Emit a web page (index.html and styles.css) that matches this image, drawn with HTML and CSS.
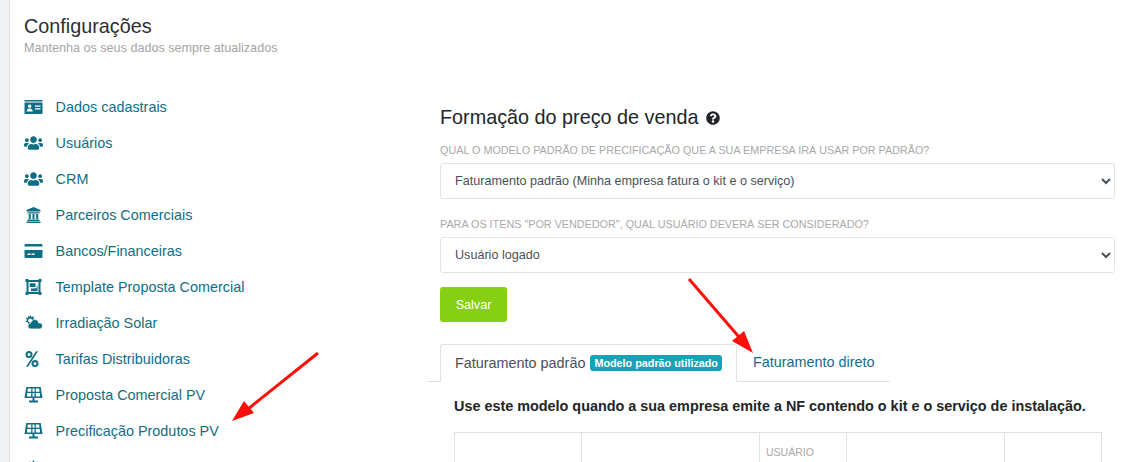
FILE: index.html
```html
<!DOCTYPE html>
<html lang="pt-BR">

<head>
    <meta charset="UTF-8">
    <meta name="viewport" content="width=device-width, initial-scale=1.0">
    <title>Configurações</title>
    <link rel="stylesheet" href="styles.css">
</head>

<body>
    <svg class="defs" width="0" height="0">
        <symbol id="i-users" viewBox="0 0 640 512"><path d="M96 224c35.3 0 64-28.7 64-64s-28.7-64-64-64-64 28.7-64 64 28.7 64 64 64zm448 0c35.3 0 64-28.7 64-64s-28.7-64-64-64-64 28.7-64 64 28.7 64 64 64zm32 32h-64c-17.6 0-33.5 7.1-45.1 18.6 40.3 22.1 68.9 62 75.1 109.4h66c17.7 0 32-14.3 32-32v-32c0-35.3-28.7-64-64-64zm-256 0c61.9 0 112-50.1 112-112S381.9 32 320 32 208 82.1 208 144s50.1 112 112 112zm76.8 32h-8.3c-20.8 10-43.9 16-68.5 16s-47.6-6-68.5-16h-8.3C179.6 288 128 339.6 128 403.2V432c0 26.5 21.5 48 48 48h288c26.5 0 48-21.5 48-48v-28.8c0-63.6-51.6-115.2-115.2-115.2zm-223.7-13.4C161.5 263.1 145.6 256 128 256H64c-35.3 0-64 28.7-64 64v32c0 17.7 14.3 32 32 32h65.9c6.3-47.4 34.9-87.3 75.2-109.4z"/></symbol>
        <symbol id="i-solar" viewBox="0 0 18 16"><path fill-rule="evenodd" d="M1.800 0h14.400L18 11H0zM3.300 1.500 3 4.700h3.700l.1-3.200zM8 1.500v3.200h2V1.500zM11.200 1.500l.1 3.200H15l-.3-3.200zM2.800 6l-.4 3.500h4.200L6.700 6zM8 6v3.500h2V6zM11.300 6l.1 3.500h4.200L15.200 6z"/><path d="M8 11h2v2.800H8zM4.500 13.500h9V15.500h-9z"/></symbol>
    </svg>

    <div class="page">
        <header class="page-head">
            <h1>Configurações</h1>
            <p>Mantenha os seus dados sempre atualizados</p>
        </header>

        <div class="columns">
            <ul class="menu">
                <li><svg class="ico" viewBox="0 0 18 16"><path d="M0 1h18v1.400H0zM0 3.400h18V15H0z"/><circle cx="5.200" cy="7.300" r="1.700" fill="#fff"/><path d="M2.200 12.400c0-2 1.200-3 3-3s3 1 3 3zM10.500 6.500h5.500v1.300h-5.500zM10.500 9.300h5.500v1.300h-5.500z" fill="#fff"/></svg><a>Dados cadastrais</a></li>
                <li><svg class="ico"><use href="#i-users"/></svg><a>Usuários</a></li>
                <li><svg class="ico"><use href="#i-users"/></svg><a>CRM</a></li>
                <li><svg class="ico" viewBox="0 0 18 16"><path d="M9 0l7 3v1.500H2V3zM3 5.300h12V6.500H3zM4.300 7h2v5h-2zM8 7h2v5H8zM11.700 7h2v5h-2zM3 12.500h12V14H3zM2 14.500h14V16H2z"/></svg><a>Parceiros Comerciais</a></li>
                <li><svg class="ico" viewBox="0 0 18 16"><path fill-rule="evenodd" d="M1 1h16a1 1 0 0 1 1 1v1.500H0V2a1 1 0 0 1 1-1zM0 7h18v7a1 1 0 0 1-1 1H1a1 1 0 0 1-1-1zM3 10.500v1.500h3v-1.500zM7 10.500v1.500h3v-1.500z"/></svg><a>Bancos/Financeiras</a></li>
                <li><svg class="ico" viewBox="0 0 18 16"><path fill-rule="evenodd" d="M1 0h3v1h10V0h3v3h-1v10h1v3h-3v-1H4v1H1v-3h1V3H1zM4 3v10h10V3zM5.200 4.200h5.800v3.900H5.200zM6.500 9.500h3v-.2h2.700V6.800h.9v5.500H6.500z"/></svg><a>Template Proposta Comercial</a></li>
                <li><svg class="ico" viewBox="0 0 18 16"><path d="M6 0l1 2 2.200-.7L9 3.500l2 .8-1.500 1.400.8 2-2.200.2L7 10 5.500 8.500 3.500 9.500l-.2-2.300-2.300-.3L2.500 5 1.300 3l2.300-.2L3.800.5 5.500 1.700z"/><circle cx="5.700" cy="5.400" r="2" fill="#fff"/><path d="M6.500 14a3 3 0 0 1-.3-6c.5-2.300 2-3.500 4-3.500 2.300 0 3.800 1.500 4 3.500a2.900 2.900 0 0 1 3.800 2.900c0 1.800-1.300 3.100-3 3.100z" stroke="#fff" stroke-width=".8"/></svg><a>Irradiação Solar</a></li>
                <li><svg class="ico" viewBox="0 0 18 16"><path fill-rule="evenodd" d="M4.500 0a3.500 3.500 0 1 1 0 7 3.500 3.500 0 0 1 0-7zm0 2a1.500 1.500 0 1 0 0 3 1.500 1.500 0 0 0 0-3zM10.500 9a3.500 3.500 0 1 1 0 7 3.500 3.500 0 0 1 0-7zm0 2a1.500 1.500 0 1 0 0 3 1.500 1.500 0 0 0 0-3zM11.500.3h2L3.500 15.700h-2z"/></svg><a>Tarifas Distribuidoras</a></li>
                <li><svg class="ico"><use href="#i-solar"/></svg><a>Proposta Comercial PV</a></li>
                <li><svg class="ico"><use href="#i-solar"/></svg><a>Precificação Produtos PV</a></li>
                <li class="menu-last"><svg class="ico" viewBox="0 0 18 16"><path d="M9 0l1.200 2.500 2.800-1 .2 2.900 2.900.2-1 2.800L18 9l-2.500 1.200 1 2.800-2.900.2-.2 2.800H4.600l-.2-2.800-2.900-.2 1-2.800L0 9l2.500-1.600-1-2.800 2.900-.2.2-2.900 2.800 1z"/></svg><a>Margem e comissão do vendedor</a></li>
            </ul>

            <main class="content">
                <h2>Formação do preço de venda <svg class="help" viewBox="0 0 512 512"><path d="M504 256c0 136.997-111.043 248-248 248S8 392.997 8 256C8 119.083 119.043 8 256 8s248 111.083 248 248zM262.655 90c-54.497 0-89.255 22.957-116.549 63.758-3.536 5.286-2.353 12.415 2.715 16.258l34.699 26.31c5.205 3.947 12.621 3.008 16.665-2.122 17.864-22.658 30.113-35.797 57.303-35.797 20.429 0 45.698 13.148 45.698 32.958 0 14.976-12.363 22.667-32.534 33.976C247.128 238.528 216 254.941 216 296v4c0 6.627 5.373 12 12 12h56c6.627 0 12-5.373 12-12v-1.333c0-28.462 83.186-29.647 83.186-106.667 0-58.002-60.165-102-116.531-102zM256 338c-25.365 0-46 20.635-46 46 0 25.364 20.635 46 46 46s46-20.636 46-46c0-25.365-20.635-46-46-46z"/></svg></h2>

                <label class="field-label">QUAL O MODELO PADRÃO DE PRECIFICAÇÃO QUE A SUA EMPRESA IRÁ USAR POR PADRÃO?</label>
                <select class="field">
                    <option>Faturamento padrão (Minha empresa fatura o kit e o serviço)</option>
                </select>

                <label class="field-label">PARA OS ITENS "POR VENDEDOR", QUAL USUÁRIO DEVERÁ SER CONSIDERADO?</label>
                <select class="field">
                    <option>Usuário logado</option>
                </select>

                <button type="button" class="btn-save">Salvar</button>

                <div class="tabs">
                    <div class="tab active-tab">Faturamento padrão <span class="badge">Modelo padrão utilizado</span></div>
                    <div class="tab">Faturamento direto</div>
                </div>

                <div class="tab-body">
                    <h3>Use este modelo quando a sua empresa emite a NF contendo o kit e o serviço de instalação.</h3>
                    <table class="price-table">
                        <tr>
                            <th class="col-a"></th>
                            <th class="col-b"></th>
                            <th class="col-c">USUÁRIO</th>
                            <th class="col-d"></th>
                            <th class="col-e"></th>
                        </tr>
                    </table>
                </div>
            </main>
        </div>
    </div>

    <!-- setas vermelhas por cima da tela -->
    <svg class="arrows" viewBox="0 0 1143 462">
        <path d="M318 353L248 409" class="arrow-line"/>
        <path d="M232 421L244 401 254 413z" class="arrow-head"/>
        <path d="M689 279L739 337" class="arrow-line"/>
        <path d="M753 353L732 341 744 331z" class="arrow-head"/>
    </svg>
</body>
</html>
```

FILE: styles.css
```css
* {
    box-sizing: border-box;
}

html,
body {
    height: 462px;
    margin: 0;
    overflow: hidden;
}

body {
    font-family: "Liberation Sans", Arial, sans-serif;
    font-size: 14.4px;
    color: #212529;
    background-color: #fff;
}

.defs {
    position: absolute;
}

.page {
    height: 462px;
    overflow: hidden;
    margin-left: 9px;
    padding: 14px 28px 0 14px;
    border-left: 1px solid #e3e4e6;
    box-shadow: -9px 0 0 #f1f2f4;
}

/* cabecalho */
.page-head h1 {
    margin: 0;
    font-size: 19.8px;
    font-weight: 400;
    line-height: 24px;
    color: #2b2f33;
}

.page-head p {
    margin: 1px 0 0;
    font-size: 12.6px;
    line-height: 18px;
    color: #a5a5a5;
}

.columns {
    display: flex;
    margin-top: 32px;
}

/* menu lateral */
.menu {
    width: 416px;
    flex: none;
    margin: 0;
    padding: 0;
    list-style: none;
}

.menu li {
    display: flex;
    align-items: center;
    height: 36px;
    color: #0f6e84;
}

.menu .menu-last {
    margin-top: 1px;
}

.menu a {
    color: #0f6e84;
}

.ico {
    flex: none;
    width: 19px;
    height: 16px;
    margin-right: 12.6px;
    fill: #0f6e84;
}

/* conteudo */
.content {
    flex: 1;
    min-width: 0;
    padding-top: 14px;
}

.content h2 {
    margin: 0 0 12px;
    font-size: 19.8px;
    font-weight: 400;
    line-height: 28px;
    color: #212529;
}

.help {
    width: 14px;
    height: 14px;
    margin-left: 2px;
    vertical-align: -1px;
    fill: #212529;
}

.field-label {
    display: block;
    margin-bottom: 6px;
    font-size: 10.8px;
    line-height: 14px;
    color: #a9a9a9;
}

.field {
    display: block;
    width: 100%;
    height: 36px;
    margin-bottom: 18px;
    padding: 0 10px;
    font-family: inherit;
    font-size: 12.6px;
    color: #495057;
    background-color: #fff;
    border: 1px solid #e2e3e5;
    border-radius: 3px;
}

.btn-save {
    display: block;
    width: 67px;
    height: 35px;
    margin-top: -4px;
    padding: 0;
    font-family: inherit;
    font-size: 12.6px;
    color: #fff;
    background-color: #86cf14;
    border: none;
    border-radius: 3px;
}

/* abas */
.tabs {
    display: flex;
    width: 463px;
    height: 38px;
    margin: 22px 0 0 -13px;
    padding-left: 13px;
    border-bottom: 1px solid #dee2e6;
}

.tab {
    height: 38px;
    padding: 0 16px;
    line-height: 36px;
    white-space: nowrap;
    color: #0f6e84;
}

.active-tab {
    width: 297px;
    padding: 0 14px;
    color: #495057;
    background-color: #fff;
    border: 1px solid #dee2e6;
    border-bottom-color: #fff;
    border-radius: 3px 3px 0 0;
}

.badge {
    display: inline-block;
    margin-left: 1px;
    padding: 0 4px;
    font-size: 10.8px;
    font-weight: 700;
    line-height: 16px;
    color: #fff;
    vertical-align: 1px;
    background-color: #17a2b8;
    border-radius: 3px;
}

.tab-body {
    padding: 16px 13px 0 14px;
}

.tab-body h3 {
    margin: 0 0 17px;
    font-size: 14.4px;
    font-weight: 700;
    line-height: 17px;
    color: #212529;
}

.price-table {
    width: 648px;
    border-collapse: collapse;
    table-layout: fixed;
}

.price-table th {
    height: 60px;
    padding: 12px 6px;
    font-size: 10.5px;
    font-weight: 400;
    line-height: 14px;
    text-align: left;
    vertical-align: top;
    color: #a9a9a9;
    border: 1px solid #dee2e6;
}

.col-a { width: 127px; }
.col-b { width: 178px; }
.col-c { width: 87px; }
.col-d { width: 158px; }

/* setas */
.arrows {
    position: absolute;
    top: 0;
    left: 0;
    width: 1143px;
    height: 462px;
    pointer-events: none;
}

.arrow-line {
    fill: none;
    stroke: #fb0f0a;
    stroke-width: 3;
}

.arrow-head {
    fill: #fb0f0a;
}
```
